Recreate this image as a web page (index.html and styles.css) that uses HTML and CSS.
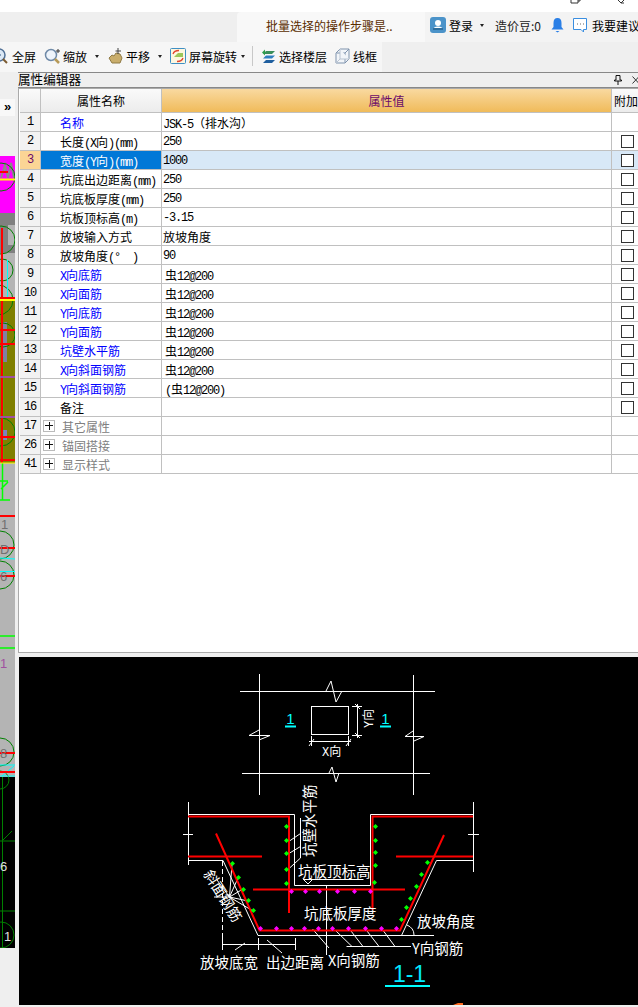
FILE: index.html
```html
<!DOCTYPE html>
<html lang="zh-CN">
<head>
  <meta charset="UTF-8">
  <title>属性编辑器</title>
  <link rel="stylesheet" href="styles.css">
</head>
<body>
  <!-- Window top edge -->
  <div class="win-top">
    <svg class="win-btn" width="12" height="4" viewBox="0 0 12 4"><path d="M1 0V3H8V0M8 1H10V0" fill="none" stroke="#333"/></svg>
    <svg class="win-btn" width="10" height="4" viewBox="0 0 10 4"><path d="M1 0L4 3L7 0M4 3L7 3" fill="none" stroke="#333"/></svg>
  </div>

  <!-- Hint tab and user area -->
  <div class="status-row">
    <div class="hint-tab">批量选择的操作步骤是..</div>
    <div class="user-area">
      <svg class="ico" viewBox="0 0 16 16">
        <rect width="16" height="16" rx="3" fill="#4b93c9"/>
        <circle cx="8" cy="6" r="3" fill="#fff"/>
        <path d="M3 13Q3 9.500 8 9.500Q13 9.500 13 13Z" fill="#fff"/>
        <rect x="3" y="11" width="10" height="2" fill="#2f6f9f"/>
      </svg>
      <span class="login">登录</span>
      <span class="caret"></span>
      <span class="beans">造价豆:0</span>
      <svg class="bell" width="13" height="16" viewBox="0 0 13 16">
        <path d="M6.500 1Q10.500 1 10.500 6V10L12.500 12.500H.5L2.500 10V6Q2.500 1 6.500 1Z" fill="#2a7fe6"/>
        <path d="M4.500 14H8.500L6.500 15.500Z" fill="#2a7fe6"/>
      </svg>
      <svg class="chat" width="16" height="17" viewBox="0 0 16 17">
        <path d="M1.500 1.500H14.500V12.500H11.500V15L9 12.500H1.500Z" fill="#fff" stroke="#3a8ee0"/>
        <path d="M5 7H6M8 7H9M11 7H12" stroke="#666"/>
      </svg>
      <span>我要建议</span>
    </div>
  </div>

  <!-- Toolbar -->
  <div class="toolbar">
    <div class="tool">
      <svg class="ico-cut" width="8" height="16" viewBox="8 0 8 16">
        <circle cx="7" cy="7" r="6" fill="#dbe8f5" stroke="#4f6f95" stroke-width="1.500"/>
        <path d="M5 7H9" stroke="#30557f"/>
        <path d="M11 11L15 15" stroke="#7a5a30" stroke-width="2"/>
      </svg>
      <span>全屏</span>
    </div>
    <div class="tool">
      <svg class="ico" viewBox="0 0 16 16">
        <circle cx="7" cy="7" r="5.500" fill="#eef4fb" stroke="#6f8aa8" stroke-width="1.500"/>
        <path d="M11 11L15 15" stroke="#b79a58" stroke-width="2.500"/>
        <path d="M12 3H16M14 1V5" stroke="#333"/>
      </svg>
      <span>缩放</span>
      <span class="caret"></span>
    </div>
    <div class="tool">
      <svg class="ico" viewBox="0 0 16 16">
        <path d="M2 10L5 7L7 8L9 5L13 6L15 10L13 15H5Z" fill="#c9ad6b" stroke="#8f7a45"/>
        <path d="M11 0V6M8.500 3H14" stroke="#444"/>
      </svg>
      <span>平移</span>
      <span class="caret"></span>
    </div>
    <div class="tool">
      <svg class="ico" viewBox="0 0 16 16">
        <rect x=".5" y=".5" width="15" height="15" rx="1" fill="#fdf7e0" stroke="#3f8fc4"/>
        <path d="M4 9L8 5H13V9Z" fill="#9cc65a"/>
        <path d="M3 6Q4 2.500 9 2.500M13 10Q12 13.500 7 13.500" fill="none" stroke="#e2452f" stroke-width="1.300"/>
      </svg>
      <span>屏幕旋转</span>
      <span class="caret caret-near"></span>
    </div>
    <span class="tool-sep"></span>
    <div class="tool">
      <svg class="ico-floor" width="15" height="16" viewBox="0 0 15 16">
        <path d="M5 3H14L11 6H2Z" fill="#3a8f5a"/>
        <path d="M5 7.500H14L11 10.500H2Z" fill="#2f7fc0"/>
        <path d="M5 12H14L11 15H2Z" fill="#1f5f9f"/>
        <path d="M1 4.500L4 1.500V7.500Z" fill="#2c9c4c"/>
      </svg>
      <span>选择楼层</span>
    </div>
    <div class="tool">
      <svg class="ico-floor" width="15" height="16" viewBox="0 0 15 16" fill="#f2f5f9" stroke="#7f93ad">
        <path d="M1 5L5 1H14V11L10 15H1Z"/>
        <path d="M1 5H10V15M10 5L14 1"/>
        <path d="M5 1V11H14M5 11L1 15" stroke="#b9c4d2"/>
      </svg>
      <span>线框</span>
    </div>
  </div>

  <div class="main">
    <div class="strip">
      <div class="more">»</div>
      <svg class="strip-art" width="15" height="792" viewBox="0 156 15 792">
        <rect x="0" y="156" width="15" height="57" fill="#ff00ff"/>
        <rect x="0" y="213" width="15" height="40" fill="#808080"/>
        <rect x="8" y="225" width="7" height="20" fill="#b4b4b4"/>
        <rect x="0" y="253" width="15" height="47" fill="#b4b4b4"/>
        <rect x="0" y="300" width="15" height="163" fill="#808000"/>
        <rect x="0" y="463" width="15" height="314" fill="#b4b4b4"/>
        <rect x="0" y="777" width="15" height="171" fill="#000"/>

        <path d="M1 178L5 165L8 178L11 163L14 178" fill="none" stroke="#8a8a8a" stroke-width="2"/>
        <rect x="3" y="322" width="4" height="40" fill="#8080a0"/>
        <rect x="3" y="430" width="4" height="10" fill="#8080c0"/>

        <g fill="none" stroke="#008000">
          <circle cx="1" cy="177" r="14"/>
          <circle cx="1" cy="240" r="14"/>
          <circle cx="2" cy="270" r="11"/>
          <circle cx="-2" cy="300" r="15"/>
          <circle cx="3" cy="335" r="12"/>
          <circle cx="1" cy="432" r="14"/>
          <circle cx="0" cy="545" r="14"/>
          <circle cx="0" cy="575" r="14"/>
          <circle cx="0" cy="752" r="14"/>
          <circle cx="0" cy="780" r="9"/>
          <circle cx="1" cy="935" r="13"/>
          <path d="M2.500 777V948M0 841H15M0 911H15M3 840L12 831"/>
        </g>

        <g fill="none" stroke="#00ffff">
          <path d="M7.500 260V300M0 571.500H15M0 765H15M0 776H15M0 558L15 559M2 776L14 766"/>
        </g>
        <g fill="none" stroke="#00ff00">
          <path d="M2.500 357V500M0 481H8M0 500H10M1 489L8 482M0 636H15M0 648H15" stroke-width="1.500"/>
        </g>
        <g fill="none" stroke="#ff0000" stroke-width="2">
          <path d="M2 228V463M0 172H8M0 298H15M0 330H15M0 344H15M0 437H15M0 460H15M0 516H15M0 548H15M0 576H15M0 753H15M0 772H15"/>
        </g>
        <g fill="none" stroke="#ffff00" stroke-width="2">
          <path d="M0 179.500H15M0 300H15"/>
          <path d="M0 463H15" stroke-width="1"/>
        </g>
        <path d="M0 377H15M0 417H15" stroke="#a050a0" stroke-width="2"/>

        <g class="strip-text">
          <text x="1" y="529">1</text>
          <text x="0" y="554">D</text>
          <text x="0" y="581">6</text>
          <text x="0" y="668" fill="#a050a0">1</text>
          <text x="0" y="758">8</text>
          <text x="0" y="871" class="strip-white">6</text>
          <text x="4" y="941" class="strip-white">1</text>
        </g>
      </svg>
    </div>

    <div class="panel">
      <div class="panel-title">
        <span class="panel-name">属性编辑器</span>
        <svg class="pin" width="8" height="10" viewBox="0 0 8 10"><path d="M2 .5H6V5H7.500V6H.5V5H2ZM4 6V10" fill="none" stroke="#111"/></svg>
        <svg class="close" width="7" height="8" viewBox="0 0 7 8"><path d="M.5 .5L7 7.500M7 .5L.5 7.500" stroke="#333"/></svg>
      </div>

      <div class="grid-wrap">
        <table class="prop-grid">
          <colgroup><col class="c-num"><col class="c-name"><col class="c-val"><col class="c-add"></colgroup>
          <thead>
            <tr><th></th><th>属性名称</th><th class="th-val">属性值</th><th class="th-add">附加</th></tr>
          </thead>
          <tbody>
            <tr><td class="num">1</td><td class="name blue">名称</td><td class="val"><span class="lat">JSK-5</span>（排水沟）</td><td></td></tr>
            <tr><td class="num">2</td><td class="name">长度<span class="lat">(X</span>向<span class="lat">)(mm)</span></td><td class="val lat">250</td><td><input type="checkbox" class="chk"></td></tr>
            <tr class="sel"><td class="num">3</td><td class="name">宽度<span class="lat">(Y</span>向<span class="lat">)(mm)</span></td><td class="val lat">1000</td><td class="add"><input type="checkbox" class="chk"></td></tr>
            <tr><td class="num">4</td><td class="name">坑底出边距离<span class="lat">(mm)</span></td><td class="val lat">250</td><td><input type="checkbox" class="chk"></td></tr>
            <tr><td class="num">5</td><td class="name">坑底板厚度<span class="lat">(mm)</span></td><td class="val lat">250</td><td><input type="checkbox" class="chk"></td></tr>
            <tr><td class="num">6</td><td class="name">坑板顶标高<span class="lat">(m)</span></td><td class="val lat">-3.15</td><td><input type="checkbox" class="chk"></td></tr>
            <tr><td class="num">7</td><td class="name">放坡输入方式</td><td class="val">放坡角度</td><td><input type="checkbox" class="chk"></td></tr>
            <tr><td class="num">8</td><td class="name">放坡角度<span class="lat">(°&nbsp;&nbsp;)</span></td><td class="val lat">90</td><td><input type="checkbox" class="chk"></td></tr>
            <tr><td class="num">9</td><td class="name blue"><span class="lat">X</span>向底筋</td><td class="val rebar">虫<span class="lat">12@200</span></td><td><input type="checkbox" class="chk"></td></tr>
            <tr><td class="num">10</td><td class="name blue"><span class="lat">X</span>向面筋</td><td class="val rebar">虫<span class="lat">12@200</span></td><td><input type="checkbox" class="chk"></td></tr>
            <tr><td class="num">11</td><td class="name blue"><span class="lat">Y</span>向底筋</td><td class="val rebar">虫<span class="lat">12@200</span></td><td><input type="checkbox" class="chk"></td></tr>
            <tr><td class="num">12</td><td class="name blue"><span class="lat">Y</span>向面筋</td><td class="val rebar">虫<span class="lat">12@200</span></td><td><input type="checkbox" class="chk"></td></tr>
            <tr><td class="num">13</td><td class="name blue">坑壁水平筋</td><td class="val rebar">虫<span class="lat">12@200</span></td><td><input type="checkbox" class="chk"></td></tr>
            <tr><td class="num">14</td><td class="name blue"><span class="lat">X</span>向斜面钢筋</td><td class="val rebar">虫<span class="lat">12@200</span></td><td><input type="checkbox" class="chk"></td></tr>
            <tr><td class="num">15</td><td class="name blue"><span class="lat">Y</span>向斜面钢筋</td><td class="val rebar"><span class="lat">(</span>虫<span class="lat">12@200)</span></td><td><input type="checkbox" class="chk"></td></tr>
            <tr><td class="num">16</td><td class="name">备注</td><td class="val"></td><td><input type="checkbox" class="chk"></td></tr>
            <tr><td class="num">17</td><td class="name group"><span class="expander"></span>其它属性</td><td class="val"></td><td></td></tr>
            <tr><td class="num">26</td><td class="name group"><span class="expander"></span>锚固搭接</td><td class="val"></td><td></td></tr>
            <tr><td class="num">41</td><td class="name group"><span class="expander"></span>显示样式</td><td class="val"></td><td></td></tr>
          </tbody>
        </table>
      </div>

      <!-- Section drawing, coordinates are page pixels -->
      <svg class="drawing" width="619" height="348" viewBox="19 657 619 348">
        <g fill="none" stroke="#fff">
          <!-- plan view -->
          <path d="M259.500 674V795M413.500 675V795M240 691.500H435M242 773.500H430"/>
          <path d="M326 691L331 681L336 702L342 691"/>
          <path d="M329 773L332 767L336 782L339 773"/>
          <path d="M259 730L249 735.500H270L259 740"/>
          <path d="M413 731L405 736.500H424L414 741"/>
          <rect x="311.500" y="706.500" width="37" height="28"/>
          <path d="M357.500 704V738M352 706.500H362M352 735.500H362M355 704L360 709M355 733L360 738"/>
          <path d="M309 741.500H351M311.500 736V746M348.500 736V746M309 746L314 739M346 746L351 739"/>

          <!-- section outline -->
          <path d="M188.500 802V865M183 834.500H193M473.500 802V872M468 834.500H479"/>
          <path d="M188 814.500H294.500V885.500H370.500V814.500H473.500"/>
          <path d="M188 860.500H223L258 935.500H434"/>
          <path d="M473 860.500H436.500L401.500 935.500"/>
          <path d="M222.500 861V944" stroke-dasharray="5 3"/>
          <path d="M222 944.500H296M222.500 938V950M258.500 938V950M295.500 938V950M235 950L245 943M267 940L282 953"/>
          <path d="M407 925Q414 928 414 935"/>

          <!-- leaders -->
          <path d="M229.500 897L232 864M229.500 897L238 878M229.500 897L243 889M229.500 897L248 901M229.500 897L253 911M229.500 897L217 880M229.500 897L214 897"/>
          <path d="M300.500 818V858L288 869.500M288 842L300.500 833.500M288 854L300.500 846.500"/>
          <path d="M303 879.500H363.500M304 880L308 884L312 880"/>
          <path d="M326.500 886V955M312.500 929L329 948"/>
          <path d="M346.500 946.500H411M335 930L352 946.500M351 931L363 946.500M367 931L379 946.500M383.500 931L395 946.500"/>
        </g>

        <!-- rebars -->
        <g fill="none" stroke="#f00" stroke-width="2">
          <path d="M188 816.500H289V913"/>
          <path d="M188 856.500H262"/>
          <path d="M253 889.500H405"/>
          <path d="M473 816.500H372.500V910"/>
          <path d="M396 856.500H473"/>
          <path d="M216 833.500L259.500 930.500H400L444 835"/>
        </g>

        <g class="dots-green">
          <path d="M286.500 824l2.500 2.500l-2.500 2.500l-2.500-2.500Z"/>
          <path d="M286.500 838l2.500 2.500l-2.500 2.500l-2.500-2.500Z"/>
          <path d="M286.500 851l2.500 2.500l-2.500 2.500l-2.500-2.500Z"/>
          <path d="M286.500 867l2.500 2.500l-2.500 2.500l-2.500-2.500Z"/>
          <path d="M286.500 881l2.500 2.500l-2.500 2.500l-2.500-2.500Z"/>
          <path d="M232.500 861l2.500 2.500l-2.500 2.500l-2.500-2.500Z"/>
          <path d="M238.500 875l2.500 2.500l-2.500 2.500l-2.500-2.500Z"/>
          <path d="M243.500 887l2.500 2.500l-2.500 2.500l-2.500-2.500Z"/>
          <path d="M248.500 898l2.500 2.500l-2.500 2.500l-2.500-2.500Z"/>
          <path d="M253.500 908l2.500 2.500l-2.500 2.500l-2.500-2.500Z"/>
          <path d="M375.500 824l2.500 2.500l-2.500 2.500l-2.500-2.500Z"/>
          <path d="M375.500 838l2.500 2.500l-2.500 2.500l-2.500-2.500Z"/>
          <path d="M375.500 850l2.500 2.500l-2.500 2.500l-2.500-2.500Z"/>
          <path d="M375.500 863l2.500 2.500l-2.500 2.500l-2.500-2.500Z"/>
          <path d="M374.500 880l2.500 2.500l-2.500 2.500l-2.500-2.500Z"/>
          <path d="M427.500 860l2.500 2.500l-2.500 2.500l-2.500-2.500Z"/>
          <path d="M421.500 872l2.500 2.500l-2.500 2.500l-2.500-2.500Z"/>
          <path d="M416.500 884l2.500 2.500l-2.500 2.500l-2.500-2.500Z"/>
          <path d="M410.500 896l2.500 2.500l-2.500 2.500l-2.500-2.500Z"/>
          <path d="M406.500 905l2.500 2.500l-2.500 2.500l-2.500-2.500Z"/>
          <path d="M401.500 917l2.500 2.500l-2.500 2.500l-2.500-2.500Z"/>
        </g>
        <g class="dots-pink">
          <path d="M291.500 889l2.500 2.500l-2.500 2.500l-2.500-2.500Z"/>
          <path d="M305.500 889l2.500 2.500l-2.500 2.500l-2.500-2.500Z"/>
          <path d="M319.500 889l2.500 2.500l-2.500 2.500l-2.500-2.500Z"/>
          <path d="M337.500 889l2.500 2.500l-2.500 2.500l-2.500-2.500Z"/>
          <path d="M354.500 889l2.500 2.500l-2.500 2.500l-2.500-2.500Z"/>
          <path d="M370.500 889l2.500 2.500l-2.500 2.500l-2.500-2.500Z"/>
          <path d="M260.500 926l2.500 2.500l-2.500 2.500l-2.500-2.500Z"/>
          <path d="M276.500 926l2.500 2.500l-2.500 2.500l-2.500-2.500Z"/>
          <path d="M291.500 926l2.500 2.500l-2.500 2.500l-2.500-2.500Z"/>
          <path d="M304.500 926l2.500 2.500l-2.500 2.500l-2.500-2.500Z"/>
          <path d="M318.500 926l2.500 2.500l-2.500 2.500l-2.500-2.500Z"/>
          <path d="M332.500 926l2.500 2.500l-2.500 2.500l-2.500-2.500Z"/>
          <path d="M348.500 926l2.500 2.500l-2.500 2.500l-2.500-2.500Z"/>
          <path d="M365.500 926l2.500 2.500l-2.500 2.500l-2.500-2.500Z"/>
          <path d="M381.500 926l2.500 2.500l-2.500 2.500l-2.500-2.500Z"/>
          <path d="M396.500 926l2.500 2.500l-2.500 2.500l-2.500-2.500Z"/>
        </g>

        <!-- section marks -->
        <path d="M285 726.500H296M380 726.500H391M385 986H430" stroke="#0ff" stroke-width="2"/>
        <text class="mark" x="290.500" y="724">1</text>
        <text class="mark" x="385.500" y="724">1</text>
        <text class="mark-big" x="409.500" y="982">1-1</text>
        <path d="M453 1005L458 1003L463 1003L463 1005Z" fill="#ff6a20"/>

        <!-- labels -->
        <g class="dim-text">
          <text x="322" y="756"><tspan class="dim-lat">X</tspan>向</text>
          <text transform="translate(373 728) rotate(-90)"><tspan class="dim-lat">Y</tspan>向</text>
        </g>
        <g class="label">
          <text transform="translate(315 857) rotate(-90)">坑壁水平筋</text>
          <text x="298" y="877">坑板顶标高</text>
          <text x="304" y="919">坑底板厚度</text>
          <text x="417" y="927">放坡角度</text>
          <text x="412" y="954">Y向钢筋</text>
          <text x="328" y="966">X向钢筋</text>
          <text x="200" y="968">放坡底宽</text>
          <text x="266" y="968">出边距离</text>
          <text transform="translate(203 874) rotate(58)">斜面钢筋</text>
        </g>
      </svg>
    </div>
  </div>
</body>
</html>
```

FILE: styles.css
```css
html, body {
  margin: 0;
  padding: 0;
}
body {
  width: 638px;
  height: 1007px;
  overflow: hidden;
  background-color: #efefef;
  font-family: "Noto Sans CJK SC", sans-serif;
  font-size: 12px;
  color: #000;
}

/* Top of the window */
.win-top {
  height: 12px;
  background-color: #fff;
  display: flex;
  justify-content: flex-end;
  gap: 35px;
  padding-right: 11px;
}
.win-btn {
  display: block;
}

/* Hint tab + user area */
.status-row {
  height: 30px;
  display: flex;
  padding-left: 237px;
}
.hint-tab {
  width: 159px;
  padding-left: 29px;
  background-color: #f8f8f8;
  border-radius: 4px 0 0 0;
  color: #5a2d00;
  line-height: 28px;
}
.user-area {
  flex: 1;
  box-sizing: border-box;
  display: flex;
  align-items: center;
  padding-left: 5px;
  padding-bottom: 4px;
  background-color: #f3f3f3;
  overflow: hidden;
  white-space: nowrap;
}
.ico {
  width: 16px;
  height: 16px;
  flex: none;
}
.login {
  margin-left: 3px;
}
.caret {
  width: 0;
  height: 0;
  margin-left: 7px;
  border-left: 2.5px solid transparent;
  border-right: 2.5px solid transparent;
  border-top: 3px solid #222;
  flex: none;
}
.beans {
  margin-left: 11px;
  color: #222;
}
.bell {
  margin-left: 10px;
  flex: none;
}
.chat {
  margin-left: 8px;
  margin-right: 4px;
  flex: none;
}

/* Toolbar */
.toolbar {
  box-sizing: border-box;
  width: 382px;
  height: 30px;
  padding-bottom: 2px;
  display: flex;
  align-items: center;
  gap: 8px;
  background-color: #f6f6f6;
}
.tool {
  display: flex;
  align-items: center;
  gap: 3px;
  white-space: nowrap;
}
.tool .caret {
  margin-left: 5px;
}
.tool .caret-near {
  margin-left: 1px;
}
.ico-cut {
  margin-right: 1px;
}
.tool-sep {
  width: 1px;
  height: 20px;
  background-color: #c8c8c8;
  margin-left: -1px;
}

/* Left canvas strip + property panel */
.main {
  display: flex;
}
.strip {
  width: 15px;
  flex: none;
}
.more {
  margin-top: 27px;
  height: 17px;
  background-color: #f8f8f8;
  font-family: "Liberation Sans", sans-serif;
  font-size: 13px;
  font-weight: bold;
  line-height: 15px;
  text-align: center;
}
.strip-art {
  display: block;
  margin-top: 40px;
}
.strip-text {
  font-family: "Liberation Sans", sans-serif;
  font-size: 13px;
  fill: #707070;
}
.strip-white {
  fill: #e0e0e0;
}

.panel {
  width: 620px;
  margin-left: 3px;
  flex: none;
}
.panel-title {
  height: 14px;
  border-top: 1px solid #888;
  border-bottom: 1px solid #888;
  display: flex;
  align-items: center;
  font-size: 12.6px;
  line-height: 14px;
  white-space: nowrap;
}
.panel-name {
  margin-top: -3px;
}
.pin {
  margin-left: auto;
}
.close {
  margin-left: 10px;
  margin-right: -1px;
}

.grid-wrap {
  box-sizing: border-box;
  height: 565px;
  background-color: #fff;
  border-top: 1px solid #aaa;
  border-left: 1px solid #aaa;
  border-bottom: 1px solid #aaa;
  padding-left: 1px;
  overflow: hidden;
}
.prop-grid {
  width: 620px;
  table-layout: fixed;
  border-collapse: separate;
  border-spacing: 0;
  font-size: 12px;
}
.c-num { width: 21px; }
.c-name { width: 121px; }
.c-val { width: 450px; }
.c-add { width: 28px; }

.prop-grid th {
  box-sizing: border-box;
  height: 24px;
  padding: 0;
  font-weight: normal;
  background: linear-gradient(#fafafa, #ececec);
  border-right: 1px solid #c0c0c0;
  border-bottom: 1px solid #c0c0c0;
}
.prop-grid .th-val {
  background: linear-gradient(#f9d9a0, #f0bb5a);
  color: #6a0a6a;
}
.prop-grid .th-add {
  text-align: left;
  padding-left: 2px;
  white-space: nowrap;
  border-right: none;
}
.prop-grid td {
  box-sizing: border-box;
  height: 19px;
  padding: 0;
  border-right: 1px solid #c0c0c0;
  border-bottom: 1px solid #c0c0c0;
  line-height: 13px;
  white-space: nowrap;
  overflow: hidden;
  vertical-align: middle;
}
.prop-grid td:last-child {
  border-right: none;
}
.prop-grid .num {
  background-color: #f2f2f2;
  text-align: center;
  font-family: "Liberation Mono", monospace;
  letter-spacing: -1.2px;
}
.prop-grid .name {
  padding-left: 19px;
}
.prop-grid .val {
  padding-left: 1px;
}
.prop-grid .rebar {
  padding-left: 3px;
}
.blue {
  color: #0000ff;
}
.prop-grid .group {
  padding-left: 2px;
  color: #808080;
}
.lat {
  font-family: "Liberation Mono", monospace;
  letter-spacing: -1.2px;
}
span.lat {
  line-height: 0;
}
td.lat {
  padding-top: 2px;
}
.expander {
  display: inline-block;
  box-sizing: border-box;
  width: 12px;
  height: 12px;
  margin-right: 7px;
  border: 1px solid #bbb;
  vertical-align: top;
  background:
    linear-gradient(#111, #111) center / 8px 1px no-repeat,
    linear-gradient(#111, #111) center / 1px 8px no-repeat,
    #fff;
}
.chk {
  appearance: none;
  display: block;
  box-sizing: border-box;
  width: 13px;
  height: 13px;
  margin: 0 0 0 9px;
  background-color: #fff;
  border: 1px solid #333;
}

/* Selected row */
.sel .num {
  background-color: #fbd595;
  color: #6a0a6a;
}
.sel .name {
  background-color: #0078d7;
  color: #fff;
}
.sel .val,
.sel .add {
  background-color: #d8e8f7;
}

/* Section drawing */
.drawing {
  display: block;
  margin: 4px 0 0 1px;
  background-color: #000;
}
.dots-green {
  fill: #00ff00;
}
.dots-pink {
  fill: #ff00ff;
}
.mark {
  font-family: "Liberation Sans", sans-serif;
  font-size: 15px;
  fill: #00ffff;
  text-anchor: middle;
}
.mark-big {
  font-family: "Liberation Sans", sans-serif;
  font-size: 23px;
  fill: #00e8ff;
  text-anchor: middle;
}
.dim-text {
  font-size: 12px;
  fill: #fff;
}
.dim-lat {
  font-family: "Liberation Mono", monospace;
}
.label {
  font-size: 14.5px;
  fill: #fff;
}
```
